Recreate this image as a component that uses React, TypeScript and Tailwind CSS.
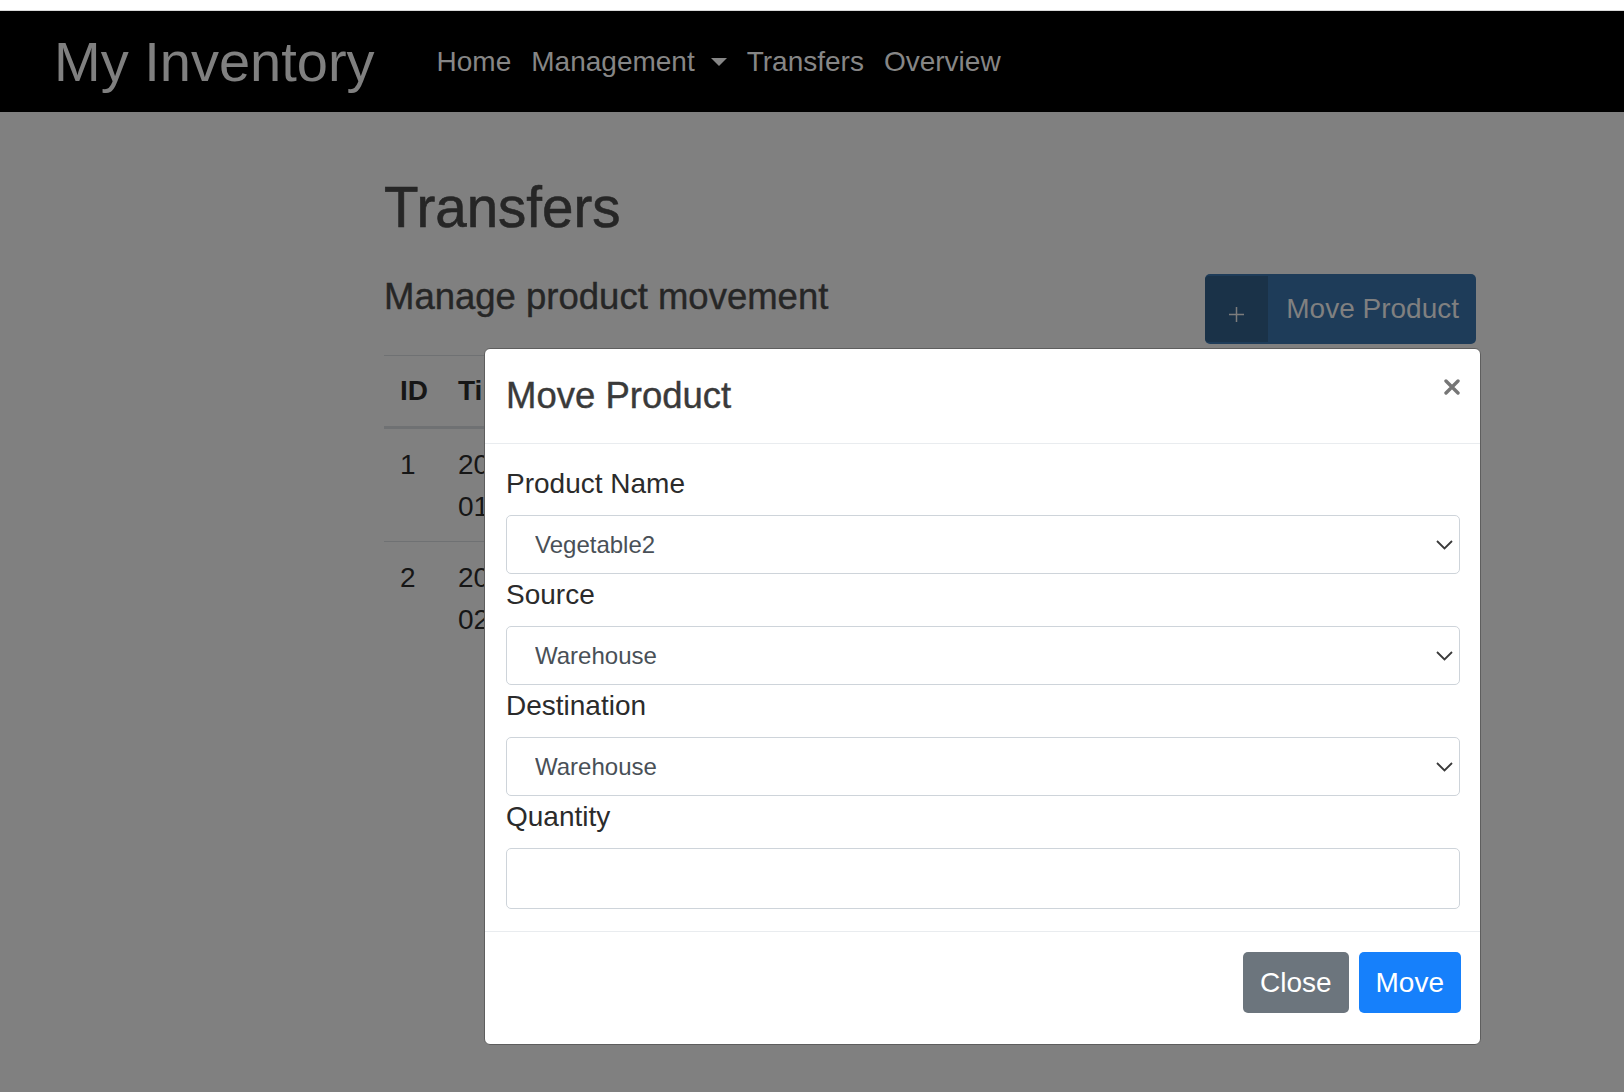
import type { ReactNode } from "react";

type Transfer = {
  id: number;
  time: [string, string];
  product: string;
  from: string;
  to: string;
  qty: number;
};

const transfers: Transfer[] = [
  { id: 1, time: ["2019-11-21", "01:15:32"], product: "Vegetable1", from: "Warehouse", to: "Store A", qty: 12 },
  { id: 2, time: ["2019-11-21", "02:40:07"], product: "Vegetable2", from: "Store A", to: "Warehouse", qty: 5 },
];

const locations = ["Warehouse", "Store A", "Store B"];

function Chevron() {
  return (
    <svg width="17" height="10" viewBox="0 0 17 10" fill="none" aria-hidden="true">
      <path d="M1 1l7.5 7.5L16 1" stroke="#3a3a3a" strokeWidth="1.8" />
    </svg>
  );
}

function Field({ label, children }: { label: string; children: ReactNode }) {
  return (
    <div>
      <label className="mb-[10px] block text-[28px] leading-[42px] text-[#2b2b2b]">{label}</label>
      {children}
    </div>
  );
}

function SelectField({ label, value, options }: { label: string; value: string; options: string[] }) {
  return (
    <Field label={label}>
      <div className="relative">
        <select
          defaultValue={value}
          className="h-[59px] w-full appearance-none rounded-[5px] border border-[#ced4da] bg-white pl-[28px] pr-[40px] text-[24px] text-[#495057] outline-none"
        >
          {options.map((o) => (
            <option key={o}>{o}</option>
          ))}
        </select>
        <span className="pointer-events-none absolute right-[7px] top-1/2 flex -translate-y-1/2">
          <Chevron />
        </span>
      </div>
    </Field>
  );
}

function MoveModal() {
  return (
    <div className="absolute left-[484px] top-[348px] w-[997px] rounded-[6px] border border-[#5e5e5e] bg-white">
      {/* Header */}
      <div className="flex items-start justify-between border-b border-[#e9ecef] pb-[21px] pl-[21px] pr-[20px] pt-[21px]">
        <h5 className="text-[36.5px] leading-[52px] text-[#3a3a3a] [-webkit-text-stroke:0.4px_#3a3a3a]">Move Product</h5>
        <button className="mt-[9px] flex" aria-label="Close">
          <svg width="16" height="16" viewBox="0 0 16 16" aria-hidden="true">
            <path d="M2 2l12 12M14 2L2 14" stroke="#767676" strokeWidth="3.4" strokeLinecap="round" />
          </svg>
        </button>
      </div>

      {/* Body */}
      <div className="pb-[22px] pl-[21px] pr-[20px] pt-[19px]">
        <SelectField label="Product Name" value="Vegetable2" options={["Vegetable1", "Vegetable2", "Fruit1"]} />
        <SelectField label="Source" value="Warehouse" options={locations} />
        <SelectField label="Destination" value="Warehouse" options={locations} />
        <Field label="Quantity">
          <input
            type="text"
            className="block h-[61px] w-full rounded-[5px] border border-[#ced4da] bg-white px-[28px] text-[24px] text-[#495057] outline-none"
          />
        </Field>
      </div>

      {/* Footer */}
      <div className="flex justify-end gap-[10px] border-t border-[#e9ecef] pb-[31px] pl-[21px] pr-[19px] pt-[20px]">
        <button className="flex h-[61px] items-center rounded-[5px] bg-[#6c757d] px-[17px] text-[28px] text-white">
          Close
        </button>
        <button className="flex h-[61px] items-center rounded-[5px] bg-[#1680fb] px-[17px] text-[28px] text-white">
          Move
        </button>
      </div>
    </div>
  );
}

export default function App() {
  return (
    <div className="relative min-h-[1092px] w-full overflow-hidden bg-[#808080] font-['Liberation_Sans',Arial,sans-serif]">
      <div className="h-[11px] border-b border-[#d9d9d9] bg-white" />

      <nav className="flex h-[101px] items-center bg-black pl-[54px]">
        <span className="mr-[52px] text-[56px] leading-none text-[#808080]">My Inventory</span>
        <a className="px-[10px] text-[28px] text-[#868686]">Home</a>
        <a className="flex items-center px-[10px] text-[28px] text-[#868686]">
          Management
          <span className="ml-[16px] h-0 w-0 border-x-[8px] border-t-[8px] border-x-transparent border-t-[#868686]" />
        </a>
        <a className="px-[10px] text-[28px] text-[#868686]">Transfers</a>
        <a className="px-[10px] text-[28px] text-[#868686]">Overview</a>
      </nav>

      <main className="ml-[384px] w-[1092px]">
        <h1 className="mt-[62px] text-[56.5px] leading-[67px] text-[#262626] [-webkit-text-stroke:0.6px_#262626]">
          Transfers
        </h1>

        <div className="mt-[33px] flex items-start justify-between">
          <h4 className="mt-[1px] text-[36.5px] leading-[43px] text-[#262626] [-webkit-text-stroke:0.4px_#262626]">
            Manage product movement
          </h4>
          <button className="flex h-[70px] items-stretch rounded-[5px] bg-[#1e3c59] py-[2px] text-[28px] text-[#808080]">
            <span className="flex w-[63px] items-center justify-center rounded-l-[4px] bg-[#1a3248]">
              <svg className="mt-[10px]" width="15" height="15" viewBox="0 0 15 15" aria-hidden="true">
                <path d="M7.5 0v15M0 7.5h15" stroke="#7c7c7c" strokeWidth="1.5" />
              </svg>
            </span>
            <span className="flex items-center pl-[18px] pr-[17px]">Move Product</span>
          </button>
        </div>

        <table className="mt-[11px] w-full text-left text-[28px] leading-[42px] text-[#161616]">
          <thead>
            <tr className="border-b-[3px] border-t border-[#6f7173]">
              <th className="w-[58px] px-[16px] pb-[14px] pt-[14px] font-bold">ID</th>
              <th className="w-[200px] px-[14px] pb-[14px] pt-[14px] font-bold">Timestamp</th>
              <th className="px-[16px] pb-[14px] pt-[14px] font-bold">Product</th>
              <th className="px-[16px] pb-[14px] pt-[14px] font-bold">From</th>
              <th className="px-[16px] pb-[14px] pt-[14px] font-bold">To</th>
              <th className="px-[16px] pb-[14px] pt-[14px] font-bold">Qty</th>
            </tr>
          </thead>
          <tbody>
            {transfers.map((t) => (
              <tr key={t.id} className="border-t border-[#6f7173] align-top">
                <td className="px-[16px] pb-[13px] pt-[15px]">{t.id}</td>
                <td className="px-[14px] pb-[13px] pt-[15px]">
                  {t.time[0]}
                  <br />
                  {t.time[1]}
                </td>
                <td className="px-[16px] pb-[13px] pt-[15px]">{t.product}</td>
                <td className="px-[16px] pb-[13px] pt-[15px]">{t.from}</td>
                <td className="px-[16px] pb-[13px] pt-[15px]">{t.to}</td>
                <td className="px-[16px] pb-[13px] pt-[15px]">{t.qty}</td>
              </tr>
            ))}
          </tbody>
        </table>
      </main>

      <MoveModal />
    </div>
  );
}
